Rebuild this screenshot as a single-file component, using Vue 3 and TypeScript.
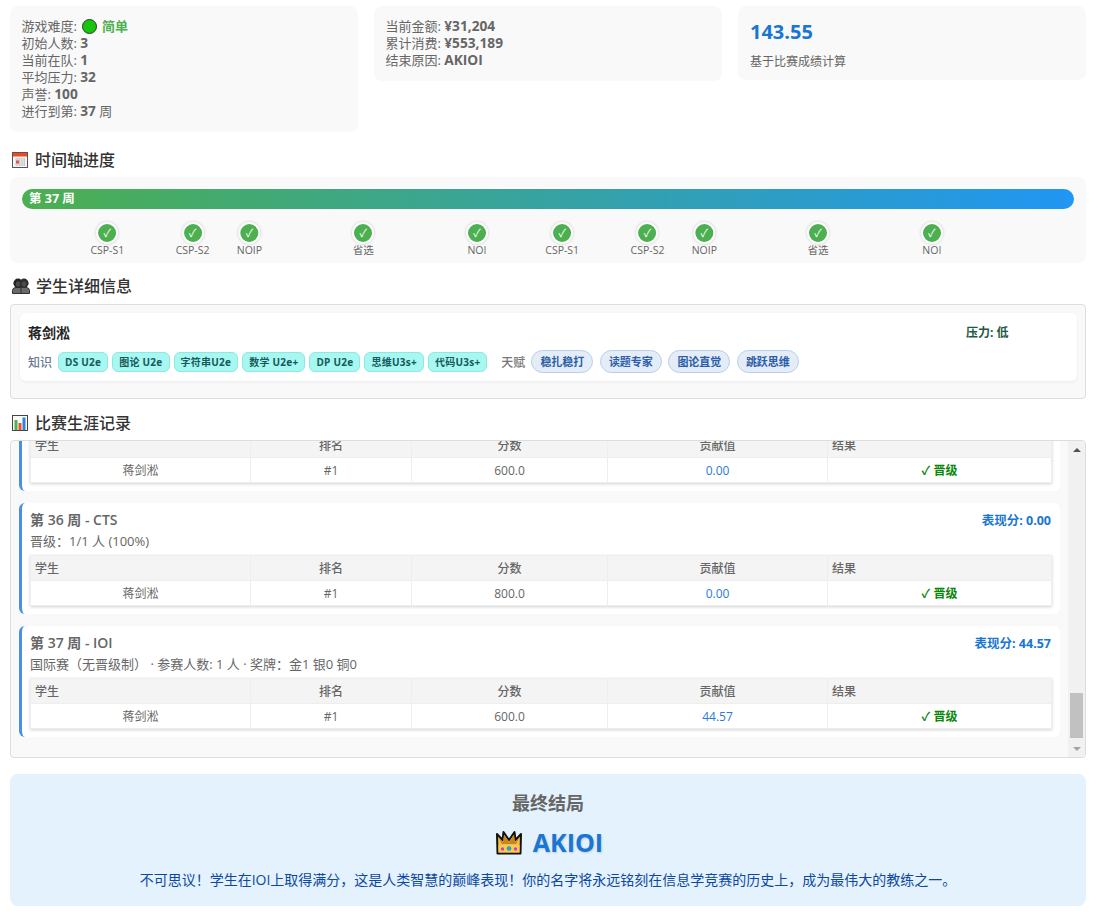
<script setup lang="ts">
import { onMounted, ref } from 'vue'

interface Contest {
  week: number
  name: string
  sub: string
  perf: string
  rank: string
  score: string
  contrib: string
}

const miles: { week: number; name: string }[] = [
  { week: 3, name: 'CSP-S1' },
  { week: 6, name: 'CSP-S2' },
  { week: 8, name: 'NOIP' },
  { week: 12, name: '省选' },
  { week: 16, name: 'NOI' },
  { week: 19, name: 'CSP-S1' },
  { week: 22, name: 'CSP-S2' },
  { week: 24, name: 'NOIP' },
  { week: 28, name: '省选' },
  { week: 32, name: 'NOI' }
]

const knowledge = ['DS U2e', '图论 U2e', '字符串U2e', '数学 U2e+', 'DP U2e', '思维U3s+', '代码U3s+']
const talents = ['稳扎稳打', '读题专家', '图论直觉', '跳跃思维']

const promo = '晋级：1/1 人 (100%)'
const base = (week: number, name: string, score: string): Contest => ({
  week, name, sub: promo, perf: '0.00', rank: '#1', score, contrib: '0.00'
})

const contests: Contest[] = [
  base(3, 'CSP-S1', '100.0'),
  base(6, 'CSP-S2', '400.0'),
  base(8, 'NOIP', '600.0'),
  base(12, '省选', '600.0'),
  base(16, 'NOI', '700.0'),
  base(19, 'CSP-S1', '100.0'),
  base(22, 'CSP-S2', '400.0'),
  base(24, 'NOIP', '600.0'),
  base(28, '省选', '600.0'),
  base(30, 'WC', '600.0'),
  base(32, 'NOI', '700.0'),
  base(33, 'CTT', '600.0'),
  base(34, 'CTT', '600.0'),
  base(35, 'CTT', '600.0'),
  base(36, 'CTS', '800.0'),
  {
    week: 37,
    name: 'IOI',
    sub: '国际赛（无晋级制） · 参赛人数: 1 人 · 奖牌：金1 银0 铜0',
    perf: '44.57',
    rank: '#1',
    score: '600.0',
    contrib: '44.57'
  }
]

const viewport = ref<HTMLElement | null>(null)
onMounted(() => {
  if (viewport.value) viewport.value.scrollTop = viewport.value.scrollHeight
})
</script>

<template>
  <div class="page">
    <div class="cards">
      <div class="card">
        <div class="diff">游戏难度: <span class="dot"></span> <b class="easy">简单</b></div>
        <div>初始人数: <b>3</b></div>
        <div>当前在队: <b>1</b></div>
        <div>平均压力: <b>32</b></div>
        <div>声誉: <b>100</b></div>
        <div>进行到第: <b>37</b> 周</div>
      </div>
      <div class="card">
        <div>当前金额: <b>¥31,204</b></div>
        <div>累计消费: <b>¥553,189</b></div>
        <div>结束原因: <b>AKIOI</b></div>
      </div>
      <div class="card score-card">
        <div class="score">143.55</div>
        <div class="score-sub">基于比赛成绩计算</div>
      </div>
    </div>

    <h3 class="heading first">
      <svg class="ico" viewBox="0 0 16 16" aria-hidden="true">
        <rect x="0.5" y="0.5" width="15" height="15" fill="#f4f4f4" stroke="#555" />
        <rect x="1" y="1" width="14" height="3.5" fill="#f0491f" />
        <path d="M3 7h10M3 9h10M3 11h10M3 13h10M5 6v8M7.5 6v8M10 6v8M12.5 6v8" stroke="#c4c4c4" stroke-width="0.8" fill="none" />
        <rect x="4" y="8.5" width="3" height="3" fill="#e2554a" />
      </svg>
      时间轴进度
    </h3>
    <div class="timeline">
      <div class="bar">第 37 周</div>
      <div class="track">
        <div v-for="m in miles" :key="m.week" class="mile" :style="{ left: (m.week / 37) * 100 + '%' }">
          <span class="tick">✓</span>
          <span class="mile-name">{{ m.name }}</span>
        </div>
      </div>
    </div>

    <h3 class="heading second">
      <svg class="ico" viewBox="0 0 18 16" aria-hidden="true">
        <path d="M0.5 15.5V12.5C0.5 10.5 2 9.5 4 9.5H14C16 9.5 17.5 10.5 17.5 12.5V15.5Z" fill="#6a6a6a" stroke="#111" stroke-width="0.8" />
        <path d="M9 10V15.5" stroke="#222" stroke-width="0.8" />
        <circle cx="6" cy="5.2" r="4.6" fill="#242424" />
        <circle cx="12" cy="5.2" r="4.6" fill="#2e2e2e" />
        <ellipse cx="6" cy="6" rx="2.2" ry="2.8" fill="#4a4a4a" />
        <ellipse cx="12" cy="6" rx="2.2" ry="2.8" fill="#4a4a4a" />
      </svg>
      学生详细信息
    </h3>
    <div class="students">
      <div class="student">
        <div class="stu-top">
          <span class="stu-name">蒋剑淞</span>
          <span class="pressure">压力: 低</span>
        </div>
        <div class="stu-tags">
          <span class="tag-label">知识</span>
          <span v-for="k in knowledge" :key="k" class="chip">{{ k }}</span>
          <span class="tag-label talent-label">天赋</span>
          <span v-for="t in talents" :key="t" class="pill">{{ t }}</span>
        </div>
      </div>
    </div>

    <h3 class="heading third">
      <svg class="ico" viewBox="0 0 16 16" aria-hidden="true">
        <rect x="0.5" y="0.5" width="15" height="15" fill="#fafafa" stroke="#444" />
        <rect x="2.5" y="5" width="3" height="10" fill="#4caf50" />
        <rect x="6.5" y="8" width="3" height="7" fill="#f0522d" />
        <rect x="10.5" y="2.5" width="3" height="12.5" fill="#2f86d6" />
      </svg>
      比赛生涯记录
    </h3>
    <div class="list">
      <div ref="viewport" class="viewport">
        <div v-for="c in contests" :key="c.week" class="item">
          <div class="item-head">
            <div class="item-title">第 {{ c.week }} 周 - {{ c.name }}</div>
            <div class="perf">表现分: {{ c.perf }}</div>
          </div>
          <div class="item-sub">{{ c.sub }}</div>
          <table class="tbl">
            <colgroup>
              <col class="c1" />
              <col class="c2" />
              <col class="c3" />
              <col class="c4" />
              <col />
            </colgroup>
            <thead>
              <tr>
                <th class="left">学生</th>
                <th>排名</th>
                <th>分数</th>
                <th>贡献值</th>
                <th class="left">结果</th>
              </tr>
            </thead>
            <tbody>
              <tr>
                <td>蒋剑淞</td>
                <td>{{ c.rank }}</td>
                <td>{{ c.score }}</td>
                <td class="contrib">{{ c.contrib }}</td>
                <td class="pass">✓ 晋级</td>
              </tr>
            </tbody>
          </table>
        </div>
      </div>
      <div class="sbar" aria-hidden="true">
        <div class="sbtn"><i class="arrow-up"></i></div>
        <div class="thumb"></div>
        <div class="sbtn"><i class="arrow-down"></i></div>
      </div>
    </div>

    <div class="ending">
      <div class="end-title">最终结局</div>
      <div class="end-main">
        <svg class="crown" viewBox="0 0 28 26" aria-hidden="true">
          <path d="M2 5 7.5 11 8.5 3 14 11 19.5 3 20.5 11 26 5 25.5 24.5H2.5Z" fill="#f7bd3e" stroke="#111" stroke-width="2" stroke-linejoin="round" />
          <path d="M4 9 7 15H21L24 9 20 13 19 6 14 13 9 6 8 13Z" fill="#c5851f" />
          <rect x="3.5" y="16" width="21" height="7.5" fill="#f9c94f" />
          <circle cx="7.5" cy="20" r="1.7" fill="#d63ac4" />
          <circle cx="14" cy="19.5" r="2.3" fill="#18a6c9" />
          <circle cx="20.5" cy="20" r="1.7" fill="#d63ac4" />
        </svg>
        <span class="end-name">AKIOI</span>
      </div>
      <div class="end-desc">不可思议！学生在IOI上取得满分，这是人类智慧的巅峰表现！你的名字将永远铭刻在信息学竞赛的历史上，成为最伟大的教练之一。</div>
    </div>
  </div>
</template>

<style>
html,
body {
  margin: 0;
  background: #fff;
}
</style>

<style scoped>
.page {
  box-sizing: border-box;
  width: 1098px;
  padding: 6px 12px 9px 10px;
  font-family: "Open Sans", "Noto Sans CJK SC", sans-serif;
  color: #666;
  font-size: 13px;
}
.cards {
  display: grid;
  grid-template-columns: repeat(3, 348px);
  gap: 16px;
  align-items: start;
}
.card {
  background: #f9f9f9;
  border-radius: 8px;
  padding: 12px 12px 12px 11.5px;
  line-height: 17px;
}
.card > div {
  height: 17px;
}
.card b {
  font-weight: 700;
  font-size: 13.7px;
  line-height: 1;
}
.diff {
  display: flex;
  align-items: center;
  gap: 5px;
}
.dot {
  width: 15px;
  height: 15px;
  border-radius: 50%;
  background: #16c60c;
  border: 1px solid #2b3a2b;
  box-sizing: border-box;
}
.card .easy {
  color: #4caf50;
  font-size: 13px;
}
.score-card {
  padding: 12px;
  height: 74px;
  box-sizing: border-box;
}
.card > .score {
  font-size: 20px;
  font-weight: 700;
  color: #1976d2;
  line-height: 28px;
  height: 28px;
}
.score-sub {
  font-size: 12px;
  line-height: 17px;
  margin-top: 7px;
}
.heading {
  display: flex;
  align-items: center;
  gap: 7px;
  margin: 0;
  font-size: 16px;
  font-weight: 500;
  color: #333;
  line-height: 22px;
}
.first {
  margin-top: 17px;
  margin-bottom: 6px;
  padding-left: 2px;
}
.second {
  gap: 6px;
  margin-top: 12px;
  margin-bottom: 7px;
  padding-left: 2px;
}
.third {
  margin-top: 13px;
  margin-bottom: 6px;
  padding-left: 2px;
}
.ico {
  width: 16px;
  height: 16px;
  flex: none;
}
.second .ico {
  width: 18px;
}
.timeline {
  background: #f9f9f9;
  border-radius: 8px;
  padding: 12px 12px 0;
  height: 86px;
  box-sizing: border-box;
}
.bar {
  height: 20px;
  border-radius: 10px;
  background: linear-gradient(90deg, #4caf50, #2196f3);
  color: #fff;
  font-size: 12.5px;
  font-weight: 700;
  line-height: 20px;
  padding-left: 7px;
}
.track {
  position: relative;
  height: 54px;
}
.mile {
  position: absolute;
  top: 13px;
  display: flex;
  flex-direction: column;
  align-items: center;
  transform: translateX(-50%);
}
.tick {
  box-sizing: border-box;
  width: 22px;
  height: 22px;
  border-radius: 50%;
  background: #4caf50;
  border: 2px solid #fff;
  box-shadow: 0 0 3px rgba(0, 0, 0, 0.2);
  color: #fff;
  font-size: 11px;
  line-height: 18px;
  text-align: center;
}
.mile-name {
  font-size: 10.5px;
  line-height: 12px;
  color: #666;
  white-space: nowrap;
}
.students {
  border: 1px solid #ddd;
  border-radius: 4px;
  background: #f9f9f9;
  height: 95px;
  box-sizing: border-box;
  padding: 8px 8px 0 9px;
}
.student {
  background: #fff;
  border-radius: 6px;
  height: 68px;
  box-sizing: border-box;
  padding: 7px 8px 8px;
  box-shadow: 0 1px 3px rgba(0, 0, 0, 0.06);
}
.stu-top {
  display: flex;
  align-items: center;
  height: 24px;
}
.stu-name {
  font-size: 14px;
  font-weight: 700;
  color: #222;
  width: 938px;
}
.pressure {
  font-size: 12px;
  font-weight: 700;
  color: #1f5a42;
}
.stu-tags {
  display: flex;
  align-items: center;
  gap: 4px;
  margin-top: 6px;
}
.tag-label {
  font-size: 12px;
  color: #6b7a90;
  font-weight: 500;
  margin-right: 2px;
}
.talent-label {
  margin-left: 10px;
  color: #777;
}
.chip {
  box-sizing: border-box;
  height: 20px;
  padding: 0 6px;
  border-radius: 6px;
  background: #a6f8f0;
  border: 1px solid #8fe9e2;
  color: #17595c;
  font-size: 10px;
  font-weight: 700;
  letter-spacing: 0.25px;
  line-height: 18px;
  white-space: nowrap;
}
.pill {
  box-sizing: border-box;
  height: 23px;
  padding: 0 8px;
  margin-right: 2.5px;
  border-radius: 12px;
  background: #e3ecf7;
  border: 1px solid #b9cfe8;
  color: #2c5ea8;
  font-size: 11px;
  font-weight: 700;
  line-height: 21px;
  white-space: nowrap;
}
.list {
  box-sizing: border-box;
  display: flex;
  height: 318px;
  border: 1px solid #ddd;
  border-radius: 4px;
  background: #f9f9f9;
  overflow: hidden;
}
.viewport {
  flex: 1;
  min-width: 0;
  overflow-y: scroll;
  scrollbar-width: none;
  padding: 8px 8px 20px;
}
.sbar {
  flex: none;
  width: 17px;
  display: flex;
  flex-direction: column;
  background: #f1f1f1;
}
.sbtn {
  flex: none;
  height: 17px;
  display: flex;
  align-items: center;
  justify-content: center;
}
.arrow-up {
  border: 4px solid transparent;
  border-top: 0;
  border-bottom-color: #505050;
}
.arrow-down {
  border: 4px solid transparent;
  border-bottom: 0;
  border-top-color: #a3a3a3;
}
.thumb {
  margin: auto 2px 2px;
  height: 45px;
  background: #c1c1c1;
}
.item {
  box-sizing: border-box;
  height: 111px;
  background: #fff;
  border-left: 3px solid #4a90e2;
  border-radius: 6px;
  padding: 7px 8px 8px;
  margin-bottom: 12px;
}
.item:last-child {
  margin-bottom: 0;
}
.item-head {
  display: flex;
  justify-content: space-between;
  align-items: center;
  height: 18px;
  padding-right: 1px;
}
.item-title {
  font-size: 14px;
  font-weight: 600;
  color: #666;
}
.perf {
  font-size: 12.5px;
  font-weight: 700;
  color: #1976d2;
}
.item-sub {
  font-size: 13px;
  line-height: 18px;
  margin-top: 4px;
  margin-bottom: 5px;
  white-space: nowrap;
}
.tbl {
  width: 1022px;
  table-layout: fixed;
  border-collapse: collapse;
  background: #fff;
  box-shadow: 0 1px 3px rgba(0, 0, 0, 0.18);
  font-size: 12px;
}
.c1 {
  width: 220px;
}
.c2 {
  width: 161px;
}
.c3 {
  width: 196px;
}
.c4 {
  width: 220px;
}
th {
  height: 25px;
  padding: 0 4px;
  box-sizing: border-box;
  background: #f4f4f4;
  border: 1px solid #eee;
  font-weight: 500;
  color: #666;
  text-align: center;
}
th.left {
  text-align: left;
}
td {
  height: 25px;
  padding: 0 5px;
  box-sizing: border-box;
  border: 1px solid #eee;
  color: #666;
  text-align: center;
}
td.contrib {
  color: #2a7ad8;
}
td.pass {
  color: #0a860a;
  font-weight: 700;
}
.ending {
  box-sizing: border-box;
  height: 132px;
  margin-top: 16px;
  background: #e3f2fd;
  border-radius: 8px;
  padding-top: 17px;
  text-align: center;
}
.end-title {
  font-size: 18px;
  font-weight: 700;
  color: #666;
  line-height: 24px;
}
.end-main {
  display: flex;
  justify-content: center;
  align-items: center;
  gap: 10px;
  margin-top: 9px;
  padding-left: 2px;
  height: 36px;
}
.crown {
  width: 28px;
  height: 26px;
}
.end-name {
  font-size: 25px;
  font-weight: 700;
  color: #1976d2;
  text-shadow: 1px 1px 2px rgba(0, 0, 0, 0.15);
}
.end-desc {
  font-size: 14px;
  color: #0d47a1;
  margin-top: 11px;
  line-height: 18px;
}
</style>
